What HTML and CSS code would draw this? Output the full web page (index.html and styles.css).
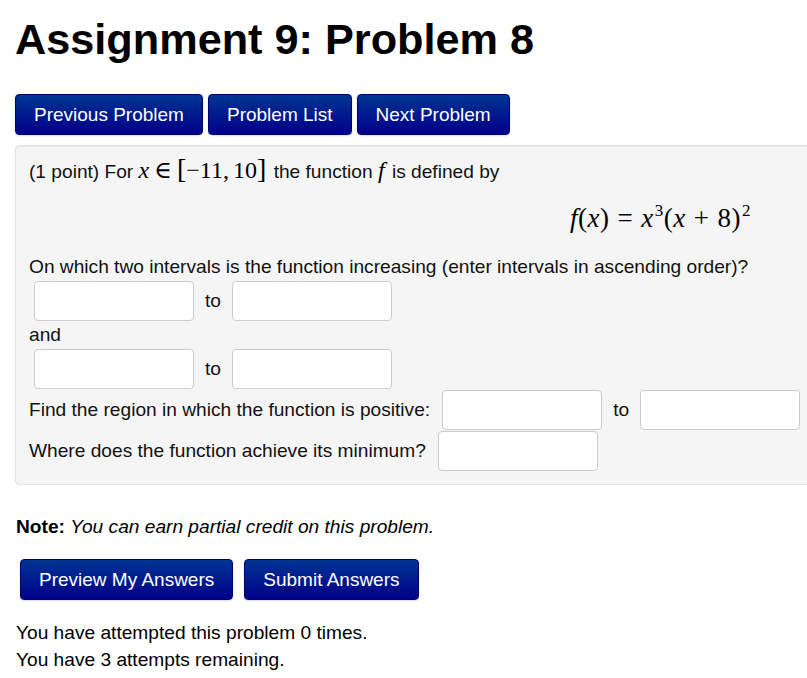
FILE: index.html
```html
<!DOCTYPE html>
<html lang="en">
<head>
<meta charset="utf-8">
<title>Assignment 9: Problem 8</title>
<link rel="stylesheet" href="styles.css">
</head>
<body>
<div class="page">
  <h1 class="title">Assignment 9: Problem 8</h1>
  <div class="nav">
    <button class="btn">Previous Problem</button>
    <button class="btn">Problem List</button>
    <button class="btn">Next Problem</button>
  </div>
  <div class="problem">
    <div class="line">(1 point) For <span class="math"><i>x</i><span class="op">∈</span><span class="br">[</span>−11,<span class="thin"></span>10<span class="br">]</span></span> the function <span class="math"><i>f</i></span> is defined by</div>
    <div class="display"><span class="math"><i>f</i>(<i>x</i>)<span class="op">=</span><i>x</i><sup>3</sup>(<i>x</i><span class="op">+</span>8)<sup>2</sup></span></div>
    <div class="line">On which two intervals is the function increasing (enter intervals in ascending order)?</div>
    <div class="row indent"><input class="ans" type="text"><span>to</span><input class="ans" type="text"></div>
    <div class="line">and</div>
    <div class="row indent"><input class="ans" type="text"><span>to</span><input class="ans" type="text"></div>
    <div class="row"><span class="q">Find the region in which the function is positive:</span><input class="ans" type="text"><span>to</span><input class="ans" type="text"></div>
    <div class="row"><span class="q">Where does the function achieve its minimum?</span><input class="ans" type="text"></div>
  </div>
  <p class="note"><b>Note:</b> <i>You can earn partial credit on this problem.</i></p>
  <div class="submit">
    <button class="btn">Preview My Answers</button>
    <button class="btn">Submit Answers</button>
  </div>
  <p class="info">You have attempted this problem 0 times.<br>You have 3 attempts remaining.</p>
</div>
</body>
</html>
```

FILE: styles.css
```css
html, body {
  margin: 0;
  padding: 0;
  overflow: hidden;
  background: #fff;
}
body {
  font-family: "Liberation Sans", Arial, sans-serif;
  font-size: 19.15px;
  line-height: 27px;
  color: #111;
}
.page {
  padding-left: 15px;
}
.title {
  font-size: 43.25px;
  line-height: 47px;
  font-weight: bold;
  color: #000;
  margin: 16px 0 0 0;
}
.nav {
  display: flex;
  gap: 5px;
  margin-top: 31px;
}
.btn {
  font-family: "Liberation Sans", Arial, sans-serif;
  font-size: 19px;
  height: 41px;
  padding: 0 18px;
  color: #fff;
  background: linear-gradient(#003592, #00008a);
  border: 1px solid #00006e;
  border-radius: 4px;
  box-shadow: 0 1px 2px rgba(0,0,0,0.15);
}
.problem {
  width: 820px;
  margin-top: 10px;
  background: #f5f5f5;
  border: 1px solid #e3e3e3;
  border-radius: 4px;
  padding: 12px 0 13px 13px;
  box-sizing: border-box;
  box-shadow: inset 0 1px 1px rgba(0,0,0,0.05);
}
.line {
  height: 27px;
}
.math {
  font-family: "Liberation Serif", "DejaVu Serif", serif;
  font-size: 24px;
  line-height: 0;
  color: #000;
}
.math i {
  font-style: italic;
}
.math .op {
  margin: 0 5px;
}
.math .thin {
  display: inline-block;
  width: 4px;
}
.math .br {
  font-size: 28px;
}
.line .math + * , .line .math {
  margin-right: 2px;
}
.math sup {
  font-size: 16px;
  line-height: 0;
  vertical-align: 10px;
  margin-left: 1px;
}
.display {
  height: 30px;
  line-height: 30px;
  margin: 21px 0 17px 0;
  width: 722px;
  text-align: right;
}
.display .math {
  font-size: 27px;
  letter-spacing: 0.5px;
}
.display .op {
  margin: 0 8px;
}
.display sup {
  font-size: 17px;
  vertical-align: 11px;
}
.row {
  display: flex;
  align-items: center;
  gap: 11px;
  height: 41px;
}
.row.indent {
  padding-left: 5px;
}
.row .q {
  margin-right: 1px;
}
.ans {
  width: 160px;
  height: 40px;
  box-sizing: border-box;
  background: #fff;
  border: 1px solid #ccc;
  border-radius: 4px;
  margin: 0;
  padding: 0 6px;
  font-size: 19px;
}
.note {
  margin: 28px 0 0 1px;
  color: #000;
}
.submit {
  display: flex;
  gap: 11px;
  margin: 19px 0 0 5px;
}
.info {
  margin: 19px 0 0 1px;
  color: #000;
}
```
